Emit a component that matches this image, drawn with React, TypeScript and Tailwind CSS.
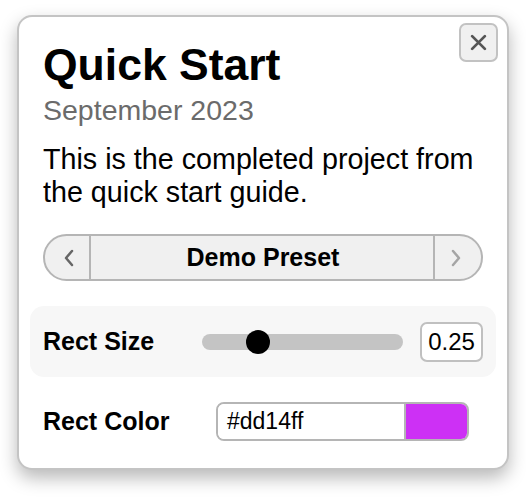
import { ReactNode } from "react";

const font = { fontFamily: '"Liberation Sans", Arial, sans-serif' };

function CloseButton() {
    return (
        <button className="absolute right-[9px] top-[6px] w-[39px] h-[39px] flex items-center justify-center rounded-[7px] border-2 border-[#c2c2c2] bg-[#f0f0f0]">
            <svg width="17" height="17" viewBox="0 0 16 16">
                <path d="M2 2L14 14M14 2L2 14" stroke="#555" strokeWidth="2.6" strokeLinecap="round" />
            </svg>
        </button>
    )
}

function Chevron(props: { dir: "left" | "right", color: string }) {
    const d = props.dir === "left" ? "M9 2L3 9L9 16" : "M3 2L9 9L3 16";
    return (
        <svg width="12" height="18" viewBox="0 0 12 18">
            <path d={d} fill="none" stroke={props.color} strokeWidth="2.5" strokeLinecap="round" strokeLinejoin="round" />
        </svg>
    )
}

function PresetBar() {
    return (
        <div className="mt-[25px] flex h-[47px] items-stretch rounded-full border-2 border-[#b5b5b5] bg-[#f0f0f0] overflow-hidden">
            <div className="w-[46px] flex items-center justify-center border-r-2 border-[#b5b5b5] pl-[4px]">
                <Chevron dir="left" color="#666" />
            </div>
            <div className="flex-1 flex items-center justify-center text-[25px] font-bold text-black pl-[2px]">
                Demo Preset
            </div>
            <div className="w-[48px] flex items-center justify-center border-l-2 border-[#b5b5b5] pr-[4px]">
                <Chevron dir="right" color="#a5a5a5" />
            </div>
        </div>
    )
}

function Row(props: { label: string, children: ReactNode, shaded?: boolean, className?: string }) {
    const bg = props.shaded ? "bg-[#f7f7f7]" : "";
    return (
        <div className={`flex items-center h-[71px] mx-[-13px] px-[13px] rounded-[14px] ${bg} ${props.className ?? ""}`}>
            <div className="w-[159px] text-[25px] font-bold text-black">{props.label}</div>
            {props.children}
        </div>
    )
}

function Slider(props: { value: number }) {
    return (
        <div className="relative w-[201px] h-[16px] rounded-full bg-[#c4c4c4]">
            <div
                className="absolute top-1/2 w-[24px] h-[24px] -translate-x-1/2 -translate-y-1/2 rounded-full bg-black"
                style={{ left: `${props.value * 100 + 3}%` }}
            />
        </div>
    )
}

export default function App() {
    return (
        <div className="bg-white w-[526px] h-[500px] pt-[15px]" style={font}>
            <div className="relative mx-[17px] h-[455px] rounded-[15px] border-2 border-[#c4c4c4] bg-white shadow-[0_8px_18px_rgba(0,0,0,0.28)] pl-[24px] pr-[24px] pt-[23px]">
                <CloseButton />
                <h1 className="text-[44.5px] leading-[50px] font-bold text-black">Quick Start</h1>
                <div className="text-[28.5px] leading-[34px] text-[#6b6b6b] mt-[3px]">September 2023</div>
                <p className="text-[28.7px] leading-[33px] text-black mt-[16px]">
                    This is the completed project from the quick start guide.
                </p>
                <PresetBar />
                <div className="mt-[25px]">
                    <Row label="Rect Size" shaded>
                        <Slider value={0.25} />
                        <div className="ml-auto w-[63px] h-[40px] flex items-center justify-center rounded-[7px] border-2 border-[#c0c0c0] bg-white text-[24px]">
                            0.25
                        </div>
                    </Row>
                    <Row label="Rect Color" className="mt-[9px]">
                        <div className="ml-[14px] flex w-[253px] h-[39px] rounded-[8px] border-2 border-[#b5b5b5] overflow-hidden">
                            <div className="flex-1 flex items-center pl-[9px] text-[23px] bg-white">#dd14ff</div>
                            <div className="w-[63px] border-l-2 border-[#b5b5b5] bg-[#cd30f5]" />
                        </div>
                    </Row>
                </div>
            </div>
        </div>
    )
}
